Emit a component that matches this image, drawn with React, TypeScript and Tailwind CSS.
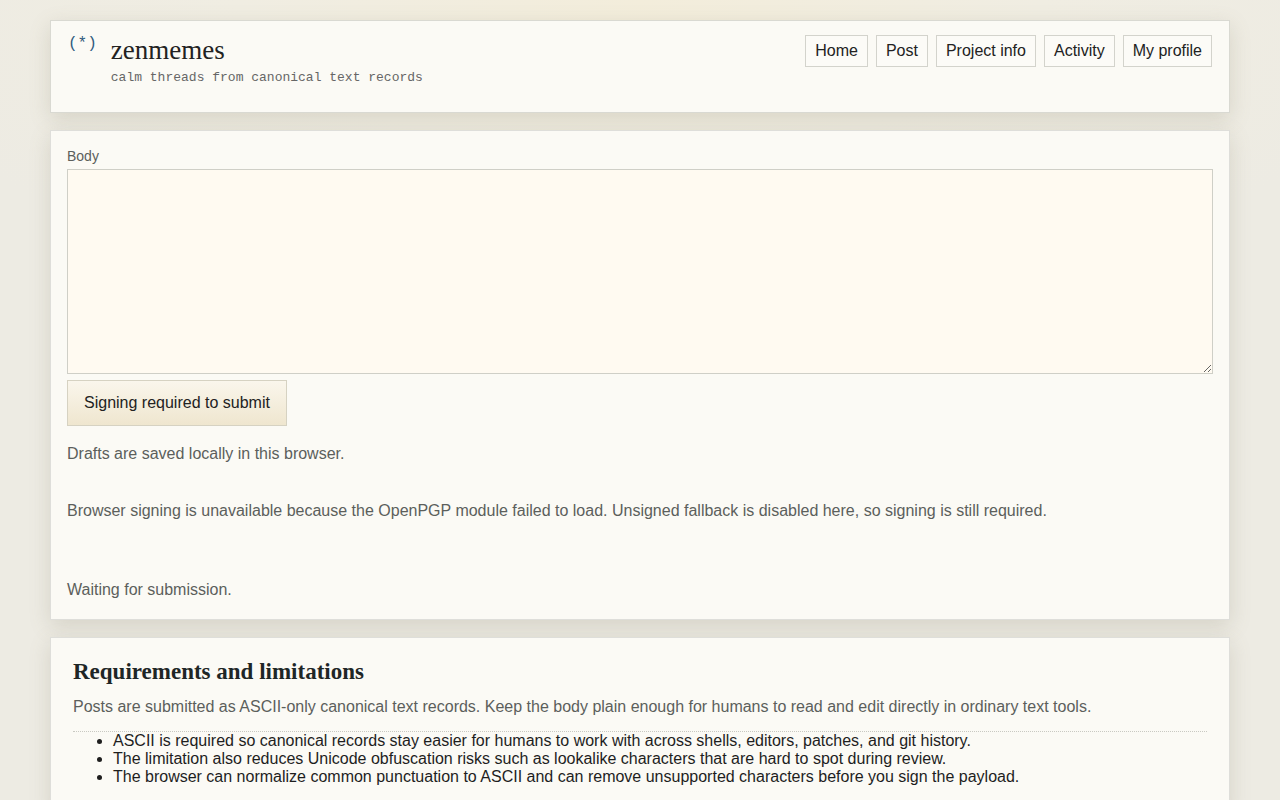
import React from "react";

export default function App() {
  const nav = ["Home", "Post", "Project info", "Activity", "My profile"];
  return (
    <div
      className="min-h-[800px] w-full pt-5 pb-10 bg-[#eeece5] bg-[radial-gradient(ellipse_800px_300px_at_50%_0%,#f3eddb_0%,#f0ede2_50%,#edebe3_100%)]"
      style={{ fontFamily: '"Liberation Sans", Arial, sans-serif' }}
    >
      <div className="mx-auto w-[1180px] flex flex-col gap-[17px]">
        {/* Header */}
        <header className="h-[93px] bg-[#fbfaf5] border border-[#d9d9d2] shadow-[0_6px_20px_rgba(120,115,90,0.2)] pl-4 pr-[17px] pt-[13px] flex justify-between items-start">
          <div className="flex items-start">
            <span
              className="text-[16px] leading-4 text-[#2f5a7e] mt-[2px] ml-[1px]"
              style={{ fontFamily: '"Liberation Mono", "DejaVu Sans Mono", monospace' }}
            >
              (*)
            </span>
            <div className="ml-[14px] mt-[1px]">
              <div
                className="text-[27px] leading-[30px] text-[#222222]"
                style={{ fontFamily: '"Liberation Serif", "Times New Roman", serif' }}
              >
                zenmemes
              </div>
              <div
                className="text-[13px] leading-4 text-[#666666] mt-[5px]"
                style={{ fontFamily: '"Liberation Mono", "Courier New", monospace' }}
              >
                calm threads from canonical text records
              </div>
            </div>
          </div>
          <nav className="flex gap-[8px] mt-[1px]">
            {nav.map((n) => (
              <a
                key={n}
                className="border border-[#d3d3cc] bg-[#fcfbf7] px-[9px] py-[5px] text-[16px] leading-5 text-[#222222]"
              >
                {n}
              </a>
            ))}
          </nav>
        </header>

        {/* Form card */}
        <section className="h-[490px] bg-[#fbfaf5] border border-[#dededa] shadow-[0_6px_20px_rgba(120,115,90,0.2)] px-4 pt-4">
          <label className="block text-[14px] leading-[18px] text-[#5c5f5c]">Body</label>
          <textarea className="mt-1 block w-full h-[205px] bg-[#fffaf1] border border-[#cfcfc7] resize-y outline-none" />
          <button className="mt-[6px] h-[46px] px-4 border border-[#d6d2c2] bg-[linear-gradient(180deg,#faf6ec_0%,#efe6cf_100%)] text-[16px] leading-5 text-[#222222]">
            Signing required to submit
          </button>
          <p className="mt-[19px] text-[16px] leading-[18px] text-[#5c5f5c]">
            Drafts are saved locally in this browser.
          </p>
          <p className="mt-[39px] text-[16px] leading-[18px] text-[#5c5f5c]">
            Browser signing is unavailable because the OpenPGP module failed to load. Unsigned fallback is disabled here, so signing is still required.
          </p>
          <p className="mt-[61px] text-[16px] leading-[18px] text-[#5c5f5c]">
            Waiting for submission.
          </p>
        </section>

        {/* Requirements card */}
        <section className="bg-[#fbfaf5] border border-[#dededa] shadow-[0_6px_20px_rgba(120,115,90,0.2)] px-[22px] pt-[20px] pb-6">
          <h2
            className="text-[23px] leading-[28px] font-bold text-[#1e2626]"
            style={{ fontFamily: '"Liberation Serif", "Times New Roman", serif' }}
          >
            Requirements and limitations
          </h2>
          <p className="mt-[11px] text-[16px] leading-5 text-[#5c5f5c]">
            Posts are submitted as ASCII-only canonical text records. Keep the body plain enough for humans to read and edit directly in ordinary text tools.
          </p>
          <div className="mt-[14px] border-t border-dotted border-[#c9c9c2]" />
          <ul className="list-disc pl-10 text-[16px] leading-[18px] text-[#1e1e1e]">
            <li>ASCII is required so canonical records stay easier for humans to work with across shells, editors, patches, and git history.</li>
            <li>The limitation also reduces Unicode obfuscation risks such as lookalike characters that are hard to spot during review.</li>
            <li>The browser can normalize common punctuation to ASCII and can remove unsupported characters before you sign the payload.</li>
          </ul>
        </section>
      </div>
    </div>
  );
}
